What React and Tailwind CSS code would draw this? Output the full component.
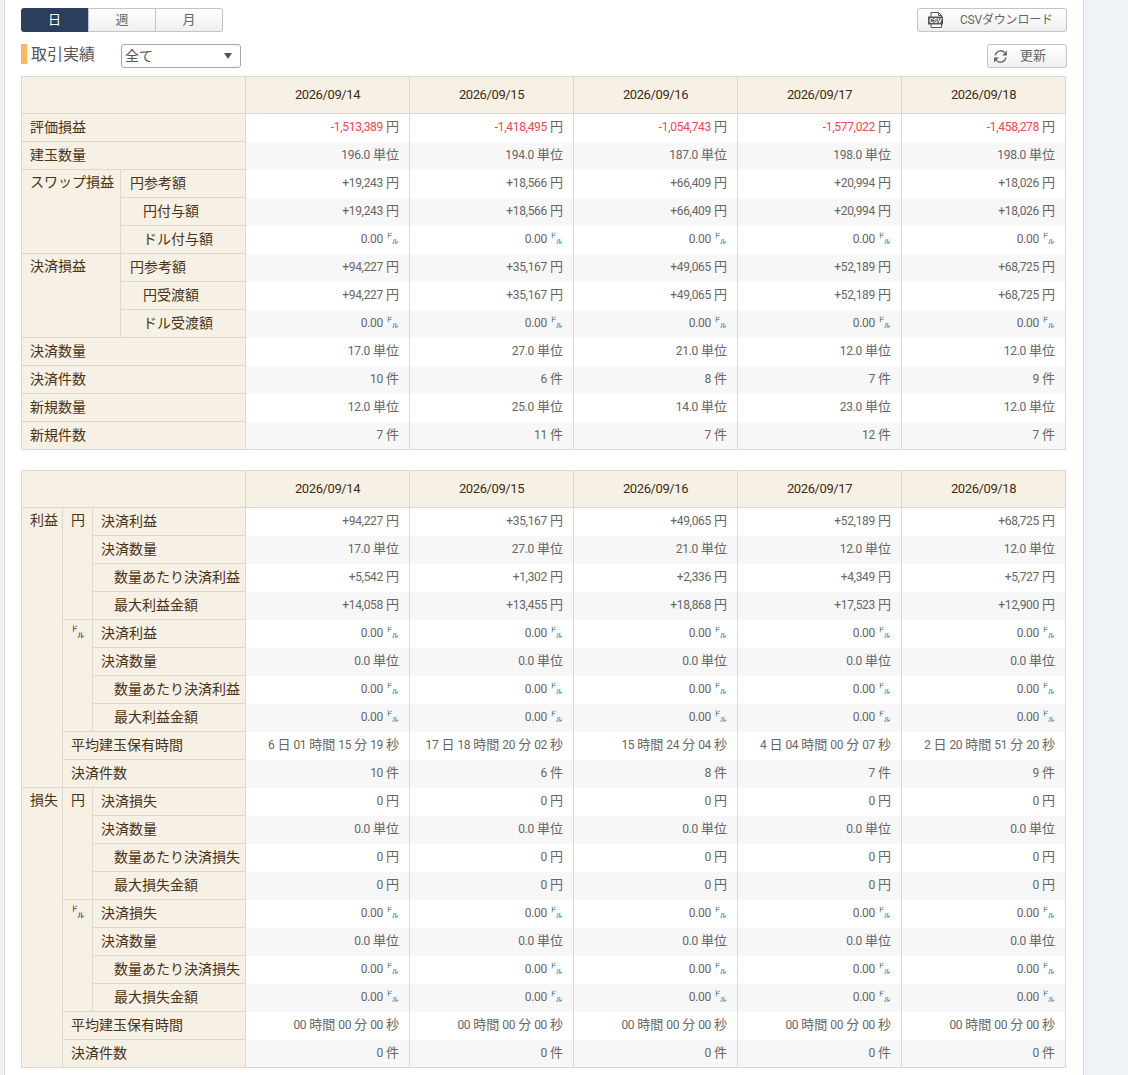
const dates = ['2026/09/14', '2026/09/15', '2026/09/16', '2026/09/17', '2026/09/18'];

const dollarZero = ['0.00', '0.00', '0.00', '0.00', '0.00'];

const firstTable = [
    { label: '評価損益', span: 2, unit: '円', red: true, values: ['-1,513,389', '-1,418,495', '-1,054,743', '-1,577,022', '-1,458,278'] },
    { label: '建玉数量', span: 2, unit: '単位', values: ['196.0', '194.0', '187.0', '198.0', '198.0'] },
    { group: 'スワップ損益', groupSpan: 3, label: '円参考額', sub: true, unit: '円', values: ['+19,243', '+18,566', '+66,409', '+20,994', '+18,026'] },
    { label: '円付与額', indent: true, unit: '円', values: ['+19,243', '+18,566', '+66,409', '+20,994', '+18,026'] },
    { label: 'ドル付与額', indent: true, unit: '㌦', values: dollarZero },
    { group: '決済損益', groupSpan: 3, label: '円参考額', sub: true, unit: '円', values: ['+94,227', '+35,167', '+49,065', '+52,189', '+68,725'] },
    { label: '円受渡額', indent: true, unit: '円', values: ['+94,227', '+35,167', '+49,065', '+52,189', '+68,725'] },
    { label: 'ドル受渡額', indent: true, unit: '㌦', values: dollarZero },
    { label: '決済数量', span: 2, unit: '単位', values: ['17.0', '27.0', '21.0', '12.0', '12.0'] },
    { label: '決済件数', span: 2, unit: '件', values: ['10', '6', '8', '7', '9'] },
    { label: '新規数量', span: 2, unit: '単位', values: ['12.0', '25.0', '14.0', '23.0', '12.0'] },
    { label: '新規件数', span: 2, unit: '件', values: ['7', '11', '7', '12', '7'] },
];

const zeroYen = ['0', '0', '0', '0', '0'];
const zeroQty = ['0.0', '0.0', '0.0', '0.0', '0.0'];
const zeroTime = Array(5).fill([['00', '時間'], ['00', '分'], ['00', '秒']]);

const secondTable = [
    { section: '利益', sectionSpan: 10, currency: '円', currencySpan: 4, label: '決済利益', unit: '円', values: ['+94,227', '+35,167', '+49,065', '+52,189', '+68,725'] },
    { label: '決済数量', unit: '単位', values: ['17.0', '27.0', '21.0', '12.0', '12.0'] },
    { label: '数量あたり決済利益', indent: true, unit: '円', values: ['+5,542', '+1,302', '+2,336', '+4,349', '+5,727'] },
    { label: '最大利益金額', indent: true, unit: '円', values: ['+14,058', '+13,455', '+18,868', '+17,523', '+12,900'] },
    { currency: '㌦', currencySpan: 4, label: '決済利益', unit: '㌦', values: dollarZero },
    { label: '決済数量', unit: '単位', values: zeroQty },
    { label: '数量あたり決済利益', indent: true, unit: '㌦', values: dollarZero },
    { label: '最大利益金額', indent: true, unit: '㌦', values: dollarZero },
    {
        label: '平均建玉保有時間', span: 2, time: [
            [['6', '日'], ['01', '時間'], ['15', '分'], ['19', '秒']],
            [['17', '日'], ['18', '時間'], ['20', '分'], ['02', '秒']],
            [['15', '時間'], ['24', '分'], ['04', '秒']],
            [['4', '日'], ['04', '時間'], ['00', '分'], ['07', '秒']],
            [['2', '日'], ['20', '時間'], ['51', '分'], ['20', '秒']],
        ],
    },
    { label: '決済件数', span: 2, unit: '件', values: ['10', '6', '8', '7', '9'] },
    { section: '損失', sectionSpan: 10, currency: '円', currencySpan: 4, label: '決済損失', unit: '円', values: zeroYen },
    { label: '決済数量', unit: '単位', values: zeroQty },
    { label: '数量あたり決済損失', indent: true, unit: '円', values: zeroYen },
    { label: '最大損失金額', indent: true, unit: '円', values: zeroYen },
    { currency: '㌦', currencySpan: 4, label: '決済損失', unit: '㌦', values: dollarZero },
    { label: '決済数量', unit: '単位', values: zeroQty },
    { label: '数量あたり決済損失', indent: true, unit: '㌦', values: dollarZero },
    { label: '最大損失金額', indent: true, unit: '㌦', values: dollarZero },
    { label: '平均建玉保有時間', span: 2, time: zeroTime },
    { label: '決済件数', span: 2, unit: '件', values: zeroYen },
];

const baseCell = 'border border-[#dcd8d0] bg-[#f7f1e5] h-[28px] p-0 text-left align-top font-normal text-[14px] leading-[20px] text-[#4a3418] whitespace-nowrap';
const labelCell = baseCell + ' pl-[8px] pt-[3px]';
const spanCell = baseCell + ' pl-[8px] pt-[2px]';

function DateHeader() {
    return dates.map((d) => (
        <th key={d} className="w-[164px] border border-[#dcd8d0] bg-[#f7f1e5] text-center font-normal text-[13px] tracking-[-0.4px] text-[#3f2c12]">
            {d}
        </th>
    ));
}

function DataCells({ row, striped }) {
    const cellClass = `border-x border-[#dcd8d0] p-0 pr-[10px] pb-[2px] text-right text-[12px] text-[#666666] whitespace-nowrap ${striped ? 'bg-[#f7f7f7]' : 'bg-white'}`;

    if (row.time) {
        return row.time.map((parts, i) => (
            <td key={i} className={cellClass}>
                {parts.map(([n, u], j) => (
                    <span key={j}>
                        {j > 0 && ' '}
                        <span className="tracking-[-0.3px]">{n}</span> <span className="text-[13px]">{u}</span>
                    </span>
                ))}
            </td>
        ));
    }

    return row.values.map((v, i) => (
        <td key={i} className={cellClass}>
            <span className={row.red ? 'tracking-[-0.3px] text-[#f04650]' : 'tracking-[-0.3px]'}>{v}</span>{' '}
            <span className={row.unit === '㌦' ? 'text-[13px] text-[#55707a]' : 'text-[13px]'}>{row.unit}</span>
        </td>
    ));
}

function FirstTable() {
    return (
        <table className="w-[1045px] table-fixed border-collapse border border-[#dcd8d0]">
            <colgroup>
                <col className="w-[99px]" />
                <col className="w-[125px]" />
                <col span={5} className="w-[164px]" />
            </colgroup>
            <thead>
                <tr className="h-[37px]">
                    <th colSpan={2} className="border border-[#dcd8d0] bg-[#f7f1e5]"></th>
                    <DateHeader />
                </tr>
            </thead>
            <tbody>
                {firstTable.map((row, i) => (
                    <tr key={i} className="h-[28px]">
                        {row.group && (
                            <th rowSpan={row.groupSpan} className={spanCell}>{row.group}</th>
                        )}
                        <th colSpan={row.span || 1} className={baseCell + ' pt-[3px] ' + (row.indent ? 'pl-[22px]' : row.sub ? 'pl-[9px]' : 'pl-[8px]')}>
                            {row.label}
                        </th>
                        <DataCells row={row} striped={i % 2 === 1} />
                    </tr>
                ))}
            </tbody>
        </table>
    );
}

function SecondTable() {
    return (
        <table className="w-[1045px] table-fixed border-collapse border border-[#dcd8d0]">
            <colgroup>
                <col className="w-[41px]" />
                <col className="w-[30px]" />
                <col className="w-[153px]" />
                <col span={5} className="w-[164px]" />
            </colgroup>
            <thead>
                <tr className="h-[37px]">
                    <th colSpan={3} className="border border-[#dcd8d0] bg-[#f7f1e5]"></th>
                    <DateHeader />
                </tr>
            </thead>
            <tbody>
                {secondTable.map((row, i) => (
                    <tr key={i} className="h-[28px]">
                        {row.section && (
                            <th rowSpan={row.sectionSpan} className={spanCell}>{row.section}</th>
                        )}
                        {row.currency && (
                            <th rowSpan={row.currencySpan} className={spanCell}>{row.currency}</th>
                        )}
                        <th colSpan={row.span || 1} className={labelCell + (row.indent ? ' pl-[21px]' : '')}>
                            {row.label}
                        </th>
                        <DataCells row={row} striped={i % 2 === 1} />
                    </tr>
                ))}
            </tbody>
        </table>
    );
}

function CsvIcon() {
    return (
        <svg width="15" height="16" viewBox="0 0 15 16" className="shrink-0">
            <path d="M3 .5h7.5l3 3v12H3z" fill="#fff" stroke="#555" />
            <path d="M10.5 .5v3h3" fill="none" stroke="#555" />
            <rect x="0" y="4.5" width="15" height="8" fill="#555" />
            <text x="7.5" y="11" textAnchor="middle" fontSize="6.5" fontWeight="700" fill="#fff" fontFamily="Roboto, sans-serif">CSV</text>
        </svg>
    );
}

function RefreshIcon() {
    return (
        <svg width="15" height="15" viewBox="0 0 14 14" className="shrink-0">
            <path d="M2 6A5.2 5.2 0 0 1 11 3.4" fill="none" stroke="#666" strokeWidth="1.2" />
            <path d="M12 8A5.2 5.2 0 0 1 3 10.6" fill="none" stroke="#666" strokeWidth="1.2" />
            <path d="M13 1.5v4.5H8.5z" fill="#666" />
            <path d="M1 12.5V8h4.5z" fill="#666" />
        </svg>
    );
}

const btnClass = 'h-[24px] rounded-[3px] border border-[#c4c4c4] bg-gradient-to-b from-white to-[#f0f0f0] text-[#666666] flex items-center';

export default function App() {
    return (
        <div className="h-[1075px] overflow-hidden bg-[#eff3f7] pl-[4px] font-['Roboto','Noto_Sans_CJK_JP',sans-serif]">
            <div className="w-[1080px] h-full bg-white border-x border-[#d9dde0] pl-[16px] pt-[8px]">
                <div className="w-[1046px] flex justify-between">
                    <div className="flex h-[24px] w-[202px] text-[13px]">
                        <button className="w-[67px] rounded-l-[3px] bg-[#2c3e5e] text-white">日</button>
                        <button className="w-[68px] border border-[#c4c4c4] bg-gradient-to-b from-white to-[#f0f0f0] text-[#666666]">週</button>
                        <button className="w-[67px] rounded-r-[3px] border border-l-0 border-[#c4c4c4] bg-gradient-to-b from-white to-[#f0f0f0] text-[#666666]">月</button>
                    </div>
                    <button className={btnClass + ' w-[150px] pl-[10px] gap-[17px] text-[12px]'}>
                        <CsvIcon />
                        <span className="tracking-[-0.2px]">CSVダウンロード</span>
                    </button>
                </div>
                <div className="w-[1046px] flex justify-between items-start mt-[12px]">
                    <div className="flex items-start">
                        <div className="flex items-center h-[20px] w-[100px]">
                            <span className="w-[6px] h-[20px] bg-[#ffb95c]"></span>
                            <h2 className="ml-[4px] pt-[2px] text-[16px] font-normal text-[#555555] whitespace-nowrap">取引実績</h2>
                        </div>
                        <div className="relative w-[120px] h-[24px] rounded-[3px] border border-[#a8a8a8] bg-white pl-[3px] text-[14px] leading-[22px] text-[#555555]">
                            全て
                            <span className="absolute right-[8px] top-[8px] w-0 h-0 border-x-[4px] border-t-[6px] border-x-transparent border-t-[#555555]"></span>
                        </div>
                    </div>
                    <button className={btnClass + ' w-[80px] pl-[5px] gap-[12px] text-[13px]'}>
                        <RefreshIcon />
                        <span>更新</span>
                    </button>
                </div>
                <div className="mt-[8px]">
                    <FirstTable />
                </div>
                <div className="mt-[20px]">
                    <SecondTable />
                </div>
            </div>
        </div>
    );
}
